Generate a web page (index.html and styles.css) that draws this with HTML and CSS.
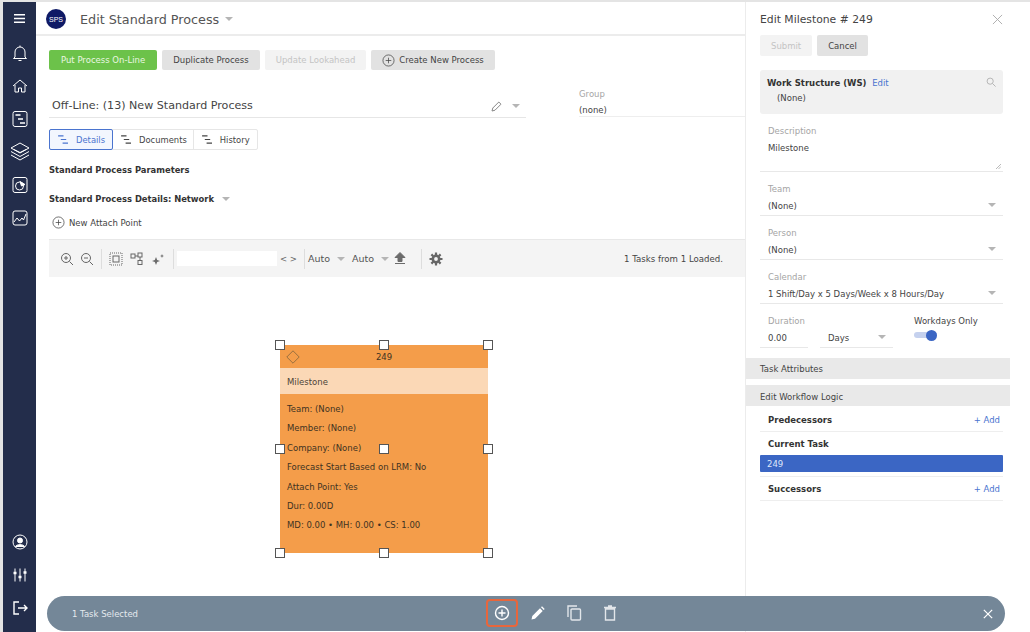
FILE: index.html
```html
<!DOCTYPE html>
<html lang="en">
<head>
  <meta charset="UTF-8" />
  <title>Edit Standard Process</title>
  <link rel="stylesheet" href="styles.css">
</head>
<body>
  <div class="app">
    <nav class="rail" aria-label="Primary Navigation">
      <svg class="rail-icon menu" viewBox="0 0 14 12"><path d="M1 2h12M1 6h12M1 10h12" stroke-width="1.6"/></svg>
      <svg class="rail-icon" viewBox="0 0 16 18"><path d="M3 13V8a5 5 0 0 1 10 0v5l1.5 1.5h-13zM6.5 16.500h3M8 3V1.500"/></svg>
      <svg class="rail-icon" viewBox="0 0 16 16"><path d="M1 8l7-6 7 6M3 7v7h3.5v-4h3v4H13V7"/></svg>
      <svg class="rail-icon" viewBox="0 0 16 18"><rect x="1" y="1.500" width="14" height="15" rx="2"/><path d="M3.500 5h5M6 9h5M8 13h5" stroke-width="1.500"/></svg>
      <svg class="rail-icon layers" viewBox="0 0 20 20"><path d="M10 1l9 5-9 5-9-5zM1 9.500l9 5 9-5M1 13l9 5 9-5M4 7.500l6 3M16 7.500l-6 3"/></svg>
      <svg class="rail-icon" viewBox="0 0 16 18"><rect x="1" y="1.500" width="14" height="15" rx="2"/><circle cx="7.500" cy="10" r="4"/><path d="M8 5.500l5 3-3.500 1.500z" fill="#fff"/></svg>
      <svg class="rail-icon" viewBox="0 0 16 16"><rect x="1" y="1" width="14" height="14" rx="2"/><path d="M2 12l3-4 2.500 3L10 8l1.500 2L14 4"/></svg>
      <span class="rail-gap"></span>
      <svg class="rail-icon" viewBox="0 0 16 16"><circle cx="8" cy="8" r="7"/><circle cx="8" cy="6.500" r="2.500" fill="#fff"/><path d="M3.500 12.500c1-2.500 8-2.500 9 0z" fill="#fff"/></svg>
      <svg class="rail-icon" viewBox="0 0 16 16"><path d="M3 1.500v13M8 1.500v13M13 1.500v13" /><path d="M1.500 6h3M6.500 10h3M11.500 5.500h3" stroke-width="2.400"/></svg>
      <svg class="rail-icon" viewBox="0 0 16 16"><path d="M7 2H2v12h5M6 8h9M12 5l3 3-3 3" stroke-width="1.400"/></svg>
    </nav>

    <main class="content">
      <header class="page-head">
        <span class="logo">SPS</span>
        <h1>Edit Standard Process</h1>
        <span class="caret caret-head"></span>
      </header>

      <section class="page-body">
        <div class="actions">
          <button class="btn btn-green">Put Process On-Line</button>
          <button class="btn">Duplicate Process</button>
          <button class="btn btn-off">Update Lookahead</button>
          <button class="btn btn-create">
            <svg class="plus-icon" viewBox="0 0 14 14"><circle cx="7" cy="7" r="6"/><path d="M7 4v6M4 7h6"/></svg>
            Create New Process
          </button>
        </div>

        <div class="title-row">
          <div class="process-name">
            <span>Off-Line: (13) New Standard Process</span>
            <svg class="pencil" viewBox="0 0 12 12"><path d="M1 11l.8-3 6-6 2.200 2.200-6 6z"/></svg>
            <span class="caret"></span>
          </div>
          <div class="group">
            <label>Group</label>
            <div class="group-value">(none)</div>
          </div>
        </div>

        <div class="tabs">
          <div class="tab tab-active">
            <svg class="gantt" viewBox="0 0 12 10"><path d="M0 1h6M3 5h6M5 9h6"/></svg>Details
          </div>
          <div class="tab">
            <svg class="gantt" viewBox="0 0 12 10"><path d="M0 1h6M3 5h6M5 9h6"/></svg>Documents
          </div>
          <div class="tab">
            <svg class="gantt" viewBox="0 0 12 10"><path d="M0 1h6M3 5h6M5 9h6"/></svg>History
          </div>
        </div>

        <h3 class="params">Standard Process Parameters</h3>
        <h3 class="details">Standard Process Details: Network <span class="caret"></span></h3>
        <div class="attach">
          <svg class="plus-icon" viewBox="0 0 14 14"><circle cx="7" cy="7" r="6"/><path d="M7 4v6M4 7h6"/></svg>
          New Attach Point
        </div>
      </section>

      <div class="toolbar">
        <svg class="tool" viewBox="0 0 14 14"><circle cx="6" cy="6" r="4.500"/><path d="M9.500 9.500l3.500 3.500M4 6h4M6 4v4"/></svg>
        <svg class="tool tool-b" viewBox="0 0 14 14"><circle cx="6" cy="6" r="4.500"/><path d="M9.500 9.500l3.500 3.500M4 6h4"/></svg>
        <i class="sep"></i>
        <svg class="tool" viewBox="0 0 14 14"><rect x="1" y="1" width="12" height="12" stroke-dasharray="1 1"/><rect x="4" y="4" width="6" height="6"/></svg>
        <svg class="tool tool-c" viewBox="0 0 14 14"><rect x="1" y="2" width="4" height="4"/><rect x="8" y="1" width="4" height="4"/><rect x="8" y="8.500" width="4" height="4"/><path d="M5 4h3M10 5v3.500"/></svg>
        <svg class="tool tool-c" viewBox="0 0 14 14"><path d="M5 5l1.200 3L9 9 6.200 10 5 13l-1.200-3L1 9l2.800-1zM11 2l.6 1.400L13 4l-1.400.6L11 6l-.6-1.400L9 4l1.400-.6z" fill="#6b6b6b" stroke="none"/></svg>
        <i class="sep sep-find"></i>
        <input class="find" type="text" />
        <span class="nav-arrows">&lt;&nbsp;&gt;</span>
        <i class="sep sep-auto"></i>
        <span class="auto">Auto</span><span class="caret"></span>
        <span class="auto auto-b">Auto</span><span class="caret"></span>
        <svg class="tool tool-up" viewBox="0 0 12 12"><path d="M6 0l5 5H8v4H4V5H1zM1 11h10" fill="#6b6b6b" stroke="#6b6b6b"/></svg>
        <i class="sep sep-gear"></i>
        <svg class="tool tool-gear" viewBox="0 0 14 14"><circle cx="7" cy="7" r="3.200" stroke-width="2.600"/><path d="M7 .5v2.500M7 11v2.500M.5 7H3M11 7h2.500M2.400 2.400l1.800 1.800M9.800 9.800l1.800 1.800M11.600 2.400L9.800 4.200M4.200 9.800l-1.800 1.800" stroke-width="2.200"/></svg>
        <span class="loaded">1 Tasks from 1 Loaded.</span>
      </div>

      <div class="canvas">
        <div class="task-card">
          <div class="task-top">
            <svg class="diamond" viewBox="0 0 14 14"><path d="M7 .8L13.200 7 7 13.200 .8 7z"/></svg>
            <span>249</span>
          </div>
          <div class="task-name">Milestone</div>
          <div class="task-lines">
            <div>Team: (None)</div>
            <div>Member: (None)</div>
            <div>Company: (None)</div>
            <div>Forecast Start Based on LRM: No</div>
            <div>Attach Point: Yes</div>
            <div>Dur: 0.00D</div>
            <div>MD: 0.00 &bull; MH: 0.00 &bull; CS: 1.00</div>
          </div>
          <i class="handle h-tl"></i><i class="handle h-tc"></i><i class="handle h-tr"></i>
          <i class="handle h-ml"></i><i class="handle h-mc"></i><i class="handle h-mr"></i>
          <i class="handle h-bl"></i><i class="handle h-bc"></i><i class="handle h-br"></i>
        </div>
      </div>
    </main>

    <aside class="panel">
      <div class="panel-head">
        <h2>Edit Milestone # 249</h2>
        <svg class="close" viewBox="0 0 12 12"><path d="M1 1l10 10M11 1L1 11"/></svg>
      </div>
      <div class="panel-actions">
        <button class="btn btn-off btn-submit">Submit</button>
        <button class="btn btn-cancel">Cancel</button>
      </div>
      <div class="ws">
        <div><b>Work Structure (WS)</b> <a href="#">Edit</a></div>
        <div class="ws-none">(None)</div>
        <svg class="ws-search" viewBox="0 0 12 12"><circle cx="5" cy="5" r="3.700"/><path d="M8 8l3.500 3.500"/></svg>
      </div>

      <div class="field field-desc">
        <label>Description</label>
        <div class="value">Milestone</div>
        <svg class="grip" viewBox="0 0 6 6"><path d="M0 6l6-6M3 6l3-3"/></svg>
      </div>
      <div class="field">
        <label>Team</label>
        <div class="value">(None)<span class="caret"></span></div>
      </div>
      <div class="field">
        <label>Person</label>
        <div class="value">(None)<span class="caret"></span></div>
      </div>
      <div class="field">
        <label>Calendar</label>
        <div class="value">1 Shift/Day x 5 Days/Week x 8 Hours/Day<span class="caret"></span></div>
      </div>
      <div class="duration-row">
        <div class="field field-dur">
          <label>Duration</label>
          <div class="value">0.00</div>
        </div>
        <div class="field field-unit">
          <div class="value">Days<span class="caret"></span></div>
        </div>
        <div class="workdays">
          <div>Workdays Only</div>
          <span class="switch"><i></i></span>
        </div>
      </div>

      <div class="section-bar bar-attrs">Task Attributes</div>
      <div class="section-bar bar-logic">Edit Workflow Logic</div>
      <div class="logic-row logic-pred"><b>Predecessors</b><a href="#">+ Add</a></div>
      <div class="logic-row logic-current"><b>Current Task</b></div>
      <div class="current-task">249</div>
      <div class="logic-row logic-succ"><b>Successors</b><a href="#">+ Add</a></div>
    </aside>
  </div>

  <div class="select-bar">
    <span class="select-count">1 Task Selected</span>
    <div class="select-tools">
      <span class="bar-tool bar-tool-on">
        <svg viewBox="0 0 16 16"><circle cx="8" cy="8" r="6.500"/><path d="M8 4.500v7M4.500 8h7"/></svg>
      </span>
      <span class="bar-tool">
        <svg viewBox="0 0 16 16"><path d="M1.500 14.500l.8-3.500 7.700-7.700 2.700 2.700-7.700 7.700zM11 2.300l1-1 2.700 2.700-1 1z" fill="#fff" stroke="none"/></svg>
      </span>
      <span class="bar-tool bar-tool-dim">
        <svg viewBox="0 0 16 16"><path d="M11 1H2v11"/><rect x="5" y="4" width="9.500" height="11" rx="1"/></svg>
      </span>
      <span class="bar-tool bar-tool-dim">
        <svg viewBox="0 0 16 16"><path d="M3.500 4h9v11h-9zM2 2.500h12M6 1h4"/></svg>
      </span>
    </div>
    <svg class="bar-close" viewBox="0 0 12 12"><path d="M1 1l10 10M11 1L1 11"/></svg>
  </div>
</body>
</html>
```

FILE: styles.css
```css
:root {
  --navy: #232d4b;
  --line: #e6e6e6;
  --text: #444;
  --label: #a5a5a5;
  --link: #4a74cf;
  --blue: #3b66c4;
  --orange: #f49d4a;
}
* {
  margin: 0; padding: 0; box-sizing: border-box;
}
html, body {
  height: 100%;
}
body {
  font-family: "DejaVu Sans", Verdana, sans-serif;
  font-size: 8.5px;
  color: var(--text);
  background: #fff;
  overflow: hidden;
  position: relative;
}
button {
  font-family: inherit;
}
svg {
  fill: none;
  stroke: currentColor;
  flex: none;
}
.app {
  display: flex;
  height: 632px;
  border-top: 2px solid #e4e4e4;
  border-left: 3px solid #e4e4e4;
}

/* left rail */
.rail {
  width: 33px;
  background: var(--navy);
  color: #fff;
  display: flex;
  flex-direction: column;
  align-items: center;
  padding: 11px 0 15px;
  gap: 15px;
  flex: none;
}
.rail-icon {
  width: 16px;
  height: 18px;
  stroke-width: 1;
}
.rail-icon.menu {
  width: 13px;
  height: 11px;
  margin-bottom: 5px;
}
.rail-icon.layers {
  width: 20px;
  height: 20px;
  margin: -1px 0;
}
.rail-gap {
  flex: 1;
  margin: -15px 0;
}

/* main column */
.content {
  flex: 1;
  min-width: 0;
  display: flex;
  flex-direction: column;
}
.page-head {
  height: 34px;
  display: flex;
  align-items: center;
  padding: 2px 0 0 10px;
  border-bottom: 2px solid #ececec;
}
.logo {
  width: 20px;
  height: 20px;
  border-radius: 50%;
  background: #0f1a66;
  color: #fff;
  font: 7px "Liberation Sans", sans-serif;
  display: flex;
  align-items: center;
  justify-content: center;
}
.page-head h1 {
  font-size: 12.75px;
  font-weight: 400;
  color: #555;
  margin-left: 14px;
}
.caret {
  display: inline-block;
  width: 0;
  height: 0;
  border-left: 4px solid transparent;
  border-right: 4px solid transparent;
  border-top: 4px solid #b5b5b5;
}
.caret-head {
  margin-left: 6px;
}
.page-body {
  padding: 14px 0 0 13px;
}
.actions {
  display: flex;
  gap: 5px;
  height: 20px;
}
.btn {
  border: none;
  border-radius: 2px;
  background: #e2e2e2;
  color: #444;
  font-size: 8.5px;
  height: 20px;
  padding: 0 11px;
  display: flex;
  align-items: center;
}
.btn-green {
  background: #6cc24a;
  color: #eaf7e2;
  padding: 0 12px;
}
.btn-off {
  background: #f3f3f3;
  color: #c4c4c4;
}
.btn-create {
  gap: 4px;
}
.plus-icon {
  width: 13px;
  height: 13px;
  stroke-width: .8;
}
.title-row {
  display: flex;
  margin-top: 19px;
}
.process-name {
  width: 477px;
  height: 29px;
  border-bottom: 1px solid var(--line);
  display: flex;
  align-items: center;
  padding: 5px 6px 0 3px;
  font-size: 11.1px;
}
.process-name span:first-child {
  flex: 1;
}
.pencil {
  width: 12px;
  height: 12px;
  color: #888;
  margin-right: 9px;
}
.group {
  margin-left: 53px;
  flex: 1;
  border-bottom: 1px solid #eee;
  height: 28px;
}
label {
  color: var(--label);
  display: block;
}
.group-value {
  margin-top: 6px;
}
.tabs {
  display: inline-flex;
  margin-top: 11px;
  height: 21px;
  border: 1px solid var(--line);
  border-radius: 2px;
  font-size: 8.4px;
}
.tab {
  display: flex;
  align-items: center;
  padding: 0 6px 0 8px;
  gap: 7px;
  border-right: 1px solid var(--line);
}
.tab:last-child {
  border-right: none;
  padding-right: 7px;
}
.tab-active {
  color: var(--link);
  background: #f2f6fe;
  border: 1px solid var(--link);
  margin: -1px 0 -1px -1px;
  padding-right: 7px;
  border-radius: 2px;
}
.gantt {
  width: 11px;
  height: 9px;
  stroke-width: 1.2;
}
.params, .details {
  font-size: 8.4px;
  font-weight: 700;
  color: #333;
}
.params {
  margin-top: 15px;
}
.details {
  margin-top: 19px;
}
.details .caret {
  margin-left: 5px;
  vertical-align: 1px;
}
.attach {
  display: flex;
  align-items: center;
  gap: 4px;
  margin: 12px 0 0 3px;
}

/* network toolbar */
.toolbar {
  margin: 10px 0 0 13px;
  height: 38px;
  background: #f4f4f4;
  border-top: 1px solid #e8e8e8;
  display: flex;
  align-items: center;
  padding-left: 11px;
  color: #666;
  flex: none;
}
.tool {
  width: 14px;
  height: 14px;
  stroke-width: 1;
}
.tool-b {
  margin-left: 6px;
}
.tool-c {
  margin-left: 7px;
}
.sep {
  width: 1px;
  height: 20px;
  background: #ddd;
  margin: 0 7px;
}
.sep-find {
  margin: 0 3px 0 8px;
}
.find {
  width: 100px;
  height: 15px;
  border: none;
  background: #fff;
}
.nav-arrows {
  margin: 0 7px 0 3px;
  white-space: nowrap;
}
.sep-auto {
  margin: 0 3px 0 0;
}
.auto {
  font-size: 9.5px;
  color: #555;
  margin-right: 7px;
}
.auto-b {
  margin-left: 7px;
}
.tool-up {
  margin-left: 5px;
  width: 12px;
  height: 13px;
}
.sep-gear {
  margin: 0 7px 0 15px;
}
.tool-gear {
  stroke-width: 2;
}
.loaded {
  margin-left: auto;
  margin-right: 22px;
  font-size: 8.6px;
  color: #444;
}

/* free canvas with the selected task */
.canvas {
  flex: 1;
  position: relative;
}
.task-card {
  position: absolute;
  left: 244px;
  top: 68px;
  width: 208px;
  height: 208px;
  background: var(--orange);
  color: #3f3322;
}
.task-top {
  height: 23px;
  padding-top: 1px;
  display: flex;
  align-items: center;
  justify-content: center;
}
.diamond {
  position: absolute;
  left: 6px;
  top: 5px;
  width: 14px;
  height: 14px;
  color: #99703f;
  stroke-width: 1;
}
.task-name {
  height: 26px;
  background: #fbd8b6;
  display: flex;
  align-items: center;
  padding: 1px 0 0 7px;
  color: #4d4438;
}
.task-lines {
  padding: 6px 7px 0;
}
.task-lines div {
  height: 19.4px;
  line-height: 19.4px;
}
.handle {
  position: absolute;
  width: 10px;
  height: 10px;
  background: #fff;
  border: 1px solid #555;
  margin: -5px 0 0 -5px;
}
.h-tl { left: 0; top: 0; }
.h-tc { left: 50%; top: 0; }
.h-tr { left: 100%; top: 0; }
.h-ml { left: 0; top: 50%; }
.h-mc { left: 50%; top: 50%; }
.h-mr { left: 100%; top: 50%; }
.h-bl { left: 0; top: 100%; }
.h-bc { left: 50%; top: 100%; }
.h-br { left: 100%; top: 100%; }

/* right drawer */
.panel {
  width: 265px;
  margin-right: 20px;
  flex: none;
  border-left: 1px solid #ececec;
  padding: 0 7px 0 14px;
  background: #fff;
}
.panel-head {
  display: flex;
  justify-content: space-between;
  align-items: center;
  height: 33px;
  padding-top: 2px;
}
.panel-head h2 {
  font-size: 10.8px;
  font-weight: 400;
  color: #444;
}
.close {
  width: 11px;
  height: 11px;
  color: #aaa;
}
.panel-actions {
  display: flex;
  gap: 5px;
}
.panel-actions .btn {
  height: 21px;
}
.ws {
  position: relative;
  margin-top: 14px;
  height: 44px;
  background: #f1f1f1;
  border-radius: 3px;
  padding: 8px 7px;
}
.ws b {
  color: #333;
}
.ws a, .logic-row a {
  color: var(--link);
  text-decoration: none;
  margin-left: 3px;
}
.ws-none {
  margin: 5px 0 0 10px;
}
.ws-search {
  position: absolute;
  right: 7px;
  top: 7px;
  width: 10px;
  height: 10px;
  color: #aaa;
}
.field {
  border-bottom: 1px solid #e8e8e8;
  padding: 0 8px;
  height: 32px;
  margin-top: 12px;
  position: relative;
}
.field label {
  margin-bottom: 6.5px;
}
.field .caret {
  position: absolute;
  right: 7px;
  bottom: 8px;
}
.field-desc {
  height: 46px;
}
.grip {
  position: absolute;
  right: 2px;
  bottom: 2px;
  width: 5px;
  height: 5px;
  color: #888;
  stroke-width: .7;
}
.duration-row {
  display: flex;
}
.field-dur {
  width: 48px;
}
.field-unit {
  width: 73px;
  margin-left: 12px;
  padding-top: 16.5px;
}
.workdays {
  margin: 12px 0 0 21px;
}
.switch {
  display: block;
  position: relative;
  width: 23px;
  height: 6px;
  border-radius: 3px;
  background: #c5d1ee;
  margin-top: 6px;
}
.switch i {
  position: absolute;
  right: 0;
  top: -2.5px;
  width: 11px;
  height: 11px;
  border-radius: 50%;
  background: var(--blue);
}
.section-bar {
  height: 21px;
  background: #e9e9e9;
  margin: 6px -7px 0 -14px;
  padding-left: 14px;
  display: flex;
  align-items: center;
}
.bar-attrs {
  margin-top: 10px;
}
.bar-logic {
  padding-top: 2px;
}
.logic-row {
  display: flex;
  justify-content: space-between;
  align-items: center;
  height: 26px;
  padding: 0 3px 0 8px;
  border-bottom: 1px solid #eee;
}
.logic-row b {
  color: #333;
}
.logic-pred {
  padding-top: 2px;
}
.logic-current {
  border: none;
  height: 23px;
  padding-top: 1px;
}
.current-task {
  height: 17px;
  background: var(--blue);
  color: #dfe7fa;
  border-radius: 1px;
  padding-left: 7px;
  display: flex;
  align-items: center;
}
.logic-succ {
  margin-top: 4px;
  height: 25px;
  border-top: 1px solid #eee;
}

/* selection bar sits over the page */
.select-bar {
  position: absolute;
  left: 47px;
  top: 596px;
  width: 958px;
  height: 35px;
  border-radius: 18px;
  background: #748798;
  color: #e4e9ee;
  display: flex;
  align-items: center;
  padding-left: 25px;
}
.select-tools {
  position: absolute;
  left: 439px;
  top: 3px;
  display: flex;
}
.bar-tool {
  width: 33px;
  height: 28px;
  margin-right: 3px;
  border: 2px solid transparent;
  border-radius: 4px;
  display: flex;
  align-items: center;
  justify-content: center;
  color: #fff;
}
.bar-tool svg {
  width: 16px;
  height: 16px;
  stroke-width: 1.4;
}
.bar-tool-on {
  width: 32px;
  border-color: #e8663c;
}
.bar-tool-dim {
  color: #e2e6ea;
}
.bar-close {
  position: absolute;
  right: 12px;
  top: 13px;
  width: 10px;
  height: 10px;
  color: #fff;
  stroke-width: 1.5;
}
```
